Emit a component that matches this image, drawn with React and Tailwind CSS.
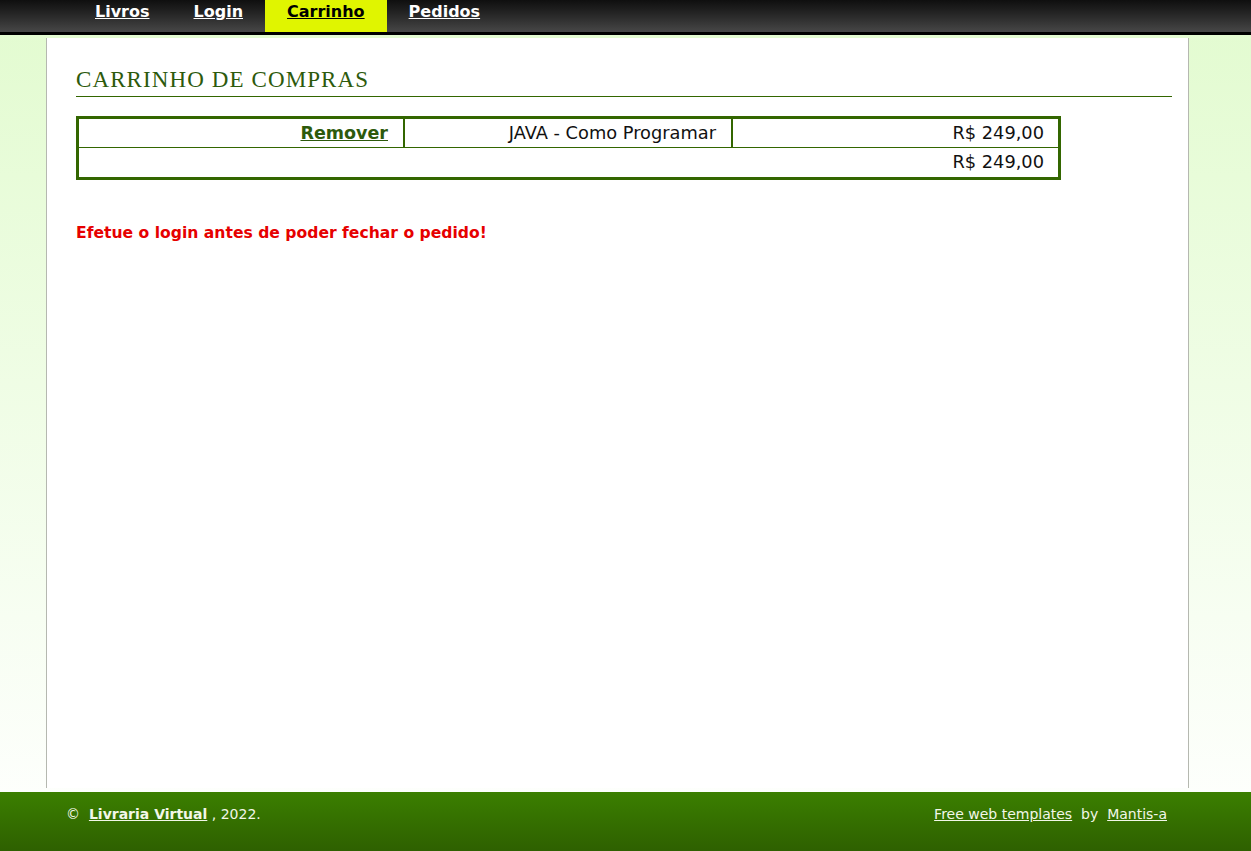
import React from 'react';

const navItems = [
  { label: 'Livros', active: false },
  { label: 'Login', active: false },
  { label: 'Carrinho', active: true },
  { label: 'Pedidos', active: false },
];

const sans = { fontFamily: '"DejaVu Sans", Verdana, sans-serif' };

const App = () => {
  return (
    <div className="min-h-[851px] flex flex-col bg-gradient-to-b from-[#e2fbcf] to-white" style={sans}>
      {/* Top menu */}
      <div className="h-[35px] bg-gradient-to-b from-[#0f0f0f] to-[#474747] border-b-[3px] border-black flex pl-[73px]">
        {navItems.map((item) => (
          <a
            key={item.label}
            href="#"
            className={`h-[32px] px-[22px] pt-[2px] text-[16px] leading-[20px] font-bold underline ${
              item.active ? 'bg-[#e0f500] text-black' : 'text-white'
            }`}
          >
            {item.label}
          </a>
        ))}
      </div>

      {/* Content column */}
      <div className="mx-[46px] mt-[3px] mb-[4px] w-[1143px] h-[750px] bg-white border-x border-[#b5b8b0] pl-[29px] pr-[16px] pt-[28px]">
        <h1
          className="text-[23px] leading-[28px] text-[#2d5a0c] border-b border-[#336600] pb-[2px] tracking-[1.1px]"
          style={{ fontFamily: '"Liberation Serif", Georgia, serif' }}
        >
          CARRINHO DE COMPRAS
        </h1>

        <div className="mt-[19px] w-[985px] border-[3px] border-[#336600] text-[17.8px] text-[#111]">
          <div className="flex h-[29px] border-b border-[#336600]">
            <div className="w-[326px] border-r-2 border-[#336600] flex items-center justify-end pr-[15px]">
              <a href="#" className="text-[17.5px] font-bold underline text-[#2d5a0c]">Remover</a>
            </div>
            <div className="w-[328px] border-r-2 border-[#336600] flex items-center justify-end pr-[15px]">
              JAVA - Como Programar
            </div>
            <div className="flex-1 flex items-center justify-end pr-[14px]">R$ 249,00</div>
          </div>
          <div className="flex h-[29px] items-center justify-end pr-[14px]">R$ 249,00</div>
        </div>

        <p className="mt-[42px] text-[15.6px] font-bold text-[#e60000]">
          Efetue o login antes de poder fechar o pedido!
        </p>
      </div>

      {/* Footer */}
      <div className="h-[59px] bg-gradient-to-b from-[#3b7f00] to-[#2e6000] flex items-start justify-between pl-[66px] pr-[84px] pt-[12px] text-[14px] text-[#f2f7e8]">
        <div>
          ©&nbsp; <a href="#" className="font-bold underline">Livraria Virtual</a> , 2022.
        </div>
        <div>
          <a href="#" className="underline">Free web templates</a>&nbsp; by&nbsp;{' '}
          <a href="#" className="underline">Mantis-a</a>
        </div>
      </div>
    </div>
  );
};

export default App;
